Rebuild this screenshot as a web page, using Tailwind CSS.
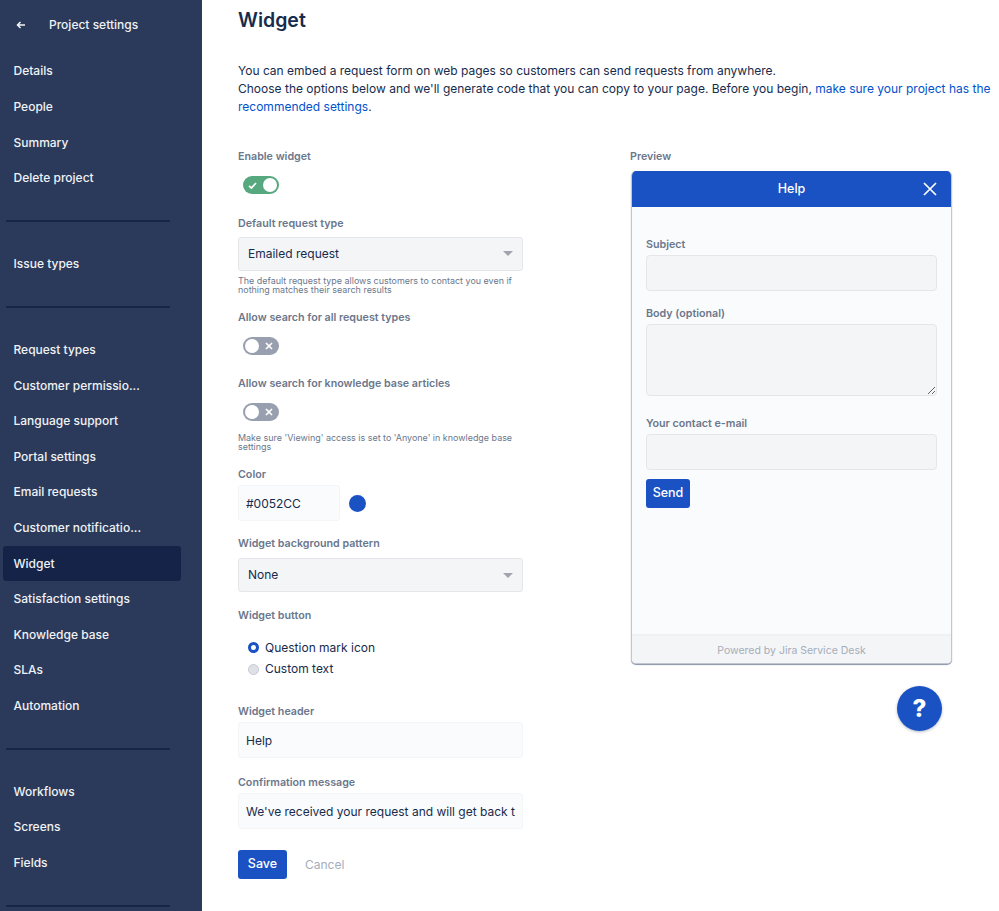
<!DOCTYPE html>
<html lang="en">
<head>
<meta charset="utf-8">
<title>Widget</title>
<script src="https://cdn.jsdelivr.net/npm/@tailwindcss/browser@4"></script>
</head>
<body class="bg-white">
<div class="flex h-[911px] w-[999px] overflow-hidden font-['Inter','Liberation_Sans',sans-serif] text-[#172b4d]">
  <aside class="flex h-[911px] w-[202px] shrink-0 flex-col overflow-hidden bg-[#2b3a5a] text-[12px] font-medium text-[#f0f2f5]">
    <div class="flex h-[50px] shrink-0 items-center pl-[14px]">
      <svg class="h-[14px] w-[14px]" viewBox="0 0 14 14" fill="none" stroke="#f4f5f7" stroke-width="1.5"><path d="M11 7H3.5M6.5 4 3.5 7l3 3"/></svg>
      <span class="ml-[21px]">Project settings</span>
    </div>
    <nav class="mt-[3.7px] flex shrink-0 flex-col">
      <a class="flex h-[35.6px] items-center pl-[13.5px]">Details</a>
      <a class="flex h-[35.6px] items-center pl-[13.5px]">People</a>
      <a class="flex h-[35.6px] items-center pl-[13.5px]">Summary</a>
      <a class="flex h-[35.6px] items-center pl-[13.5px]">Delete project</a>
      <div class="my-[24.4px] ml-[6px] h-[1.5px] w-[164px] bg-[#172548]"></div>
      <a class="flex h-[35.6px] items-center pl-[13.5px]">Issue types</a>
      <div class="my-[24.4px] ml-[6px] h-[1.5px] w-[164px] bg-[#172548]"></div>
      <a class="flex h-[35.6px] items-center pl-[13.5px]">Request types</a>
      <a class="flex h-[35.6px] items-center pl-[13.5px]">Customer permissio...</a>
      <a class="flex h-[35.6px] items-center pl-[13.5px]">Language support</a>
      <a class="flex h-[35.6px] items-center pl-[13.5px]">Portal settings</a>
      <a class="flex h-[35.6px] items-center pl-[13.5px]">Email requests</a>
      <a class="flex h-[35.6px] items-center pl-[13.5px]">Customer notificatio...</a>
      <a class="ml-[3px] flex h-[35.6px] w-[178px] items-center rounded-[3px] bg-[#142347] pl-[10.5px]">Widget</a>
      <a class="flex h-[35.6px] items-center pl-[13.5px]">Satisfaction settings</a>
      <a class="flex h-[35.6px] items-center pl-[13.5px]">Knowledge base</a>
      <a class="flex h-[35.6px] items-center pl-[13.5px]">SLAs</a>
      <a class="flex h-[35.6px] items-center pl-[13.5px]">Automation</a>
      <div class="my-[24.4px] ml-[6px] h-[1.5px] w-[164px] bg-[#172548]"></div>
      <a class="flex h-[35.6px] items-center pl-[13.5px]">Workflows</a>
      <a class="flex h-[35.6px] items-center pl-[13.5px]">Screens</a>
      <a class="flex h-[35.6px] items-center pl-[13.5px]">Fields</a>
      <div class="my-[24.4px] ml-[6px] h-[1.5px] w-[164px] bg-[#172548]"></div>
    </nav>
  </aside>

  <main class="min-w-0 flex-1 pl-[36px]">
    <h1 class="flex h-[41px] items-center text-[19.5px] leading-none font-semibold text-[#172b4d]">Widget</h1>
    <p class="mt-[21px] w-[755px] text-[12px] leading-[18px] text-[#172b4d]">You can embed a request form on web pages so customers can send requests from anywhere.<br>Choose the options below and we'll generate code that you can copy to your page. Before you begin, <a class="text-[#0052cc]">make sure your project has the recommended settings</a>.</p>

    <div class="mt-[33px] flex">
      <form class="flex w-[285px] shrink-0 flex-col">
        <label class="flex h-[16px] items-center text-[10.7px] font-semibold text-[#6b778c]">Enable widget</label>
        <div class="mt-[11px] ml-[5px] flex h-[18px] w-[36px] items-center justify-between rounded-full bg-[#57a77f] pr-[2px] pl-[5px]">
          <svg class="h-[9px] w-[9px]" viewBox="0 0 9 9" fill="none" stroke="#fff" stroke-width="1.7"><path d="M1 4.8 3.4 7 8 2"/></svg>
          <span class="h-[14px] w-[14px] rounded-full bg-white"></span>
        </div>

        <label class="mt-[22px] flex h-[16px] items-center text-[10.7px] font-semibold text-[#6b778c]">Default request type</label>
        <div class="mt-[5px] flex h-[34px] items-center justify-between rounded-[3px] border border-[#e4e6ea] bg-[#f4f5f7] px-[9px] pb-[1px] text-[12px] text-[#172b4d]">
          <span>Emailed request</span>
          <svg class="h-[5px] w-[10px]" viewBox="0 0 10 5"><path d="M0 0h10L5 5z" fill="#a0a4ad"/></svg>
        </div>
        <p class="mt-[5px] text-[8.95px] leading-[9px] text-[#6b778c]">The default request type allows customers to contact you even if nothing matches their search results</p>

        <label class="mt-[16px] flex h-[16px] items-center text-[10.7px] font-semibold text-[#6b778c]">Allow search for all request types</label>
        <div class="mt-[11px] ml-[5px] flex h-[18px] w-[36px] items-center justify-between rounded-full bg-[#989fae] pr-[6px] pl-[2px]">
          <span class="h-[14px] w-[14px] rounded-full bg-white"></span>
          <svg class="h-[8px] w-[8px]" viewBox="0 0 8 8" fill="none" stroke="#fff" stroke-width="1.7"><path d="m1 1 6 6M7 1 1 7"/></svg>
        </div>

        <label class="mt-[21px] flex h-[16px] items-center text-[10.7px] font-semibold text-[#6b778c]">Allow search for knowledge base articles</label>
        <div class="mt-[11px] ml-[5px] flex h-[18px] w-[36px] items-center justify-between rounded-full bg-[#989fae] pr-[6px] pl-[2px]">
          <span class="h-[14px] w-[14px] rounded-full bg-white"></span>
          <svg class="h-[8px] w-[8px]" viewBox="0 0 8 8" fill="none" stroke="#fff" stroke-width="1.7"><path d="m1 1 6 6M7 1 1 7"/></svg>
        </div>
        <p class="mt-[12px] text-[8.95px] leading-[9px] text-[#6b778c]">Make sure 'Viewing' access is set to 'Anyone' in knowledge base settings</p>

        <label class="mt-[16px] flex h-[16px] items-center text-[10.7px] font-semibold text-[#6b778c]">Color</label>
        <div class="mt-[2px] flex items-center">
          <input value="#0052CC" class="h-[36px] w-[102px] rounded-[3px] border border-[#f4f5f7] bg-[#fafbfc] px-[7px] text-[12px] text-[#172b4d] outline-none">
          <span class="ml-[9px] h-[17px] w-[17px] rounded-full bg-[#1a52c4]"></span>
        </div>

        <label class="mt-[15px] flex h-[16px] items-center text-[10.7px] font-semibold text-[#6b778c]">Widget background pattern</label>
        <div class="mt-[6px] flex h-[34px] items-center justify-between rounded-[3px] border border-[#e4e6ea] bg-[#f4f5f7] px-[9px] text-[12px] text-[#172b4d]">
          <span>None</span>
          <svg class="h-[5px] w-[10px]" viewBox="0 0 10 5"><path d="M0 0h10L5 5z" fill="#a0a4ad"/></svg>
        </div>

        <label class="mt-[16px] flex h-[16px] items-center text-[10.7px] font-semibold text-[#6b778c]">Widget button</label>
        <div class="mt-[13px] ml-[10px] flex h-[21.5px] items-center text-[12px] text-[#172b4d]">
          <span class="h-[11px] w-[11px] rounded-full border-[3px] border-[#1a52c4] bg-white"></span>
          <span class="ml-[6px]">Question mark icon</span>
        </div>
        <div class="ml-[10px] flex h-[21.5px] items-center text-[12px] text-[#172b4d]">
          <span class="h-[11px] w-[11px] rounded-full border border-[#c5cad3] bg-[#dfe1e6]"></span>
          <span class="ml-[6px]">Custom text</span>
        </div>

        <label class="mt-[24px] flex h-[16px] items-center text-[10.7px] font-semibold text-[#6b778c]">Widget header</label>
        <input value="Help" class="mt-[2px] h-[36px] w-full rounded-[3px] border border-[#f4f5f7] bg-[#fafbfc] px-[7px] text-[12px] text-[#172b4d] outline-none">

        <label class="mt-[17px] flex h-[16px] items-center text-[10.7px] font-semibold text-[#6b778c]">Confirmation message</label>
        <input value="We've received your request and will get back to you shortly" class="mt-[2px] h-[36px] w-full rounded-[3px] border border-[#f4f5f7] bg-[#fafbfc] px-[7px] text-[12px] text-[#172b4d] outline-none">

        <div class="mt-[21px] flex items-center">
          <button type="button" class="h-[29px] w-[49px] rounded-[3px] bg-[#1a52c4] text-[12.5px] font-medium text-white">Save</button>
          <button type="button" class="ml-[18px] text-[12px] text-[#a5adba]">Cancel</button>
        </div>
      </form>

      <section class="ml-[107px] flex w-[322px] shrink-0 flex-col">
        <div class="flex h-[16px] items-center text-[10.7px] font-semibold text-[#6b778c]">Preview</div>
        <div class="mt-[6px] ml-[1px] flex h-[493px] w-[321px] flex-col overflow-hidden rounded-[5px] border-x border-b border-[#c1c7d0] bg-[#fafbfc] shadow-[0_1px_1px_#8993a4]">
          <div class="relative flex h-[36px] shrink-0 items-center justify-center bg-[#1a52c4] text-[12.5px] font-medium text-white">
            <span>Help</span>
            <svg class="absolute right-[14px] h-[14px] w-[14px]" viewBox="0 0 14 14" fill="none" stroke="#fff" stroke-width="1.7"><path d="m1 1 12 12M13 1 1 13"/></svg>
          </div>
          <div class="flex flex-1 flex-col px-[14px]">
            <label class="mt-[30px] flex h-[16px] items-center text-[10.7px] font-semibold text-[#6b778c]">Subject</label>
            <input class="mt-[2px] h-[36px] w-full rounded-[4px] border border-[#e4e6ea] bg-[#f4f5f7] outline-none">
            <label class="mt-[15px] flex h-[16px] items-center text-[10.7px] font-semibold text-[#6b778c]">Body (optional)</label>
            <textarea class="mt-[2px] block h-[72px] w-full rounded-[4px] border border-[#e4e6ea] bg-[#f4f5f7] outline-none"></textarea>
            <label class="mt-[20px] flex h-[16px] items-center text-[10.7px] font-semibold text-[#6b778c]">Your contact e-mail</label>
            <input class="mt-[2px] h-[36px] w-full rounded-[4px] border border-[#e4e6ea] bg-[#f4f5f7] outline-none">
            <button type="button" class="mt-[9px] h-[29px] w-[44px] rounded-[3px] bg-[#1a52c4] text-[12.5px] font-medium text-white">Send</button>
          </div>
          <div class="flex h-[29px] shrink-0 items-center justify-center border-t-2 border-[#f0f1f3] bg-[#f4f5f7] pt-[2px] text-[10.5px] text-[#a5adba]">Powered by Jira Service Desk</div>
        </div>
        <div class="mt-[22px] ml-[267px] flex h-[45px] w-[45px] items-center justify-center rounded-full bg-[#1a52c4] text-[24px] leading-none font-extrabold text-white shadow-[0_1px_3px_rgba(9,30,66,0.3)]">?</div>
      </section>
    </div>
  </main>
</div>
</body>
</html>
